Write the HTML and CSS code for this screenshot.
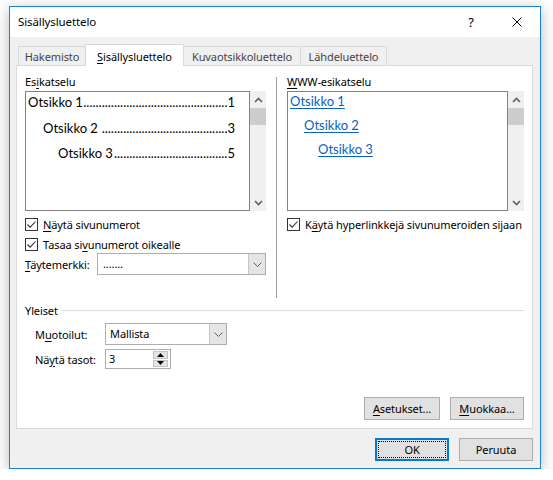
FILE: index.html
```html
<!DOCTYPE html>
<html lang="fi">
<head>
<meta charset="utf-8">
<title>Sisällysluettelo</title>
<link rel="stylesheet" href="styles.css">
</head>
<body>
<div class="window">
  <div class="titlebar">
    <span class="title">Sisällysluettelo</span>
    <div class="tb-btn help">?</div>
    <div class="tb-btn close">
      <svg width="10" height="10" viewBox="0 0 10 10"><path d="M0.5 0.5 L9.5 9.5 M9.5 0.5 L0.5 9.5" stroke="#000" stroke-width="1" fill="none"/></svg>
    </div>
  </div>
  <div class="body">
    <div class="tabs">
      <div class="tab t1">Hakemisto</div>
      <div class="tab t2 active"><u>S</u>isällysluettelo</div>
      <div class="tab t3">Kuvaotsikkoluettelo</div>
      <div class="tab t4">Lähdeluettelo</div>
    </div>
    <div class="panel">
      <div class="top">
        <div class="col left">
          <div class="label">Es<u>i</u>katselu</div>
          <div class="pv-wrap">
            <div class="preview pv-left">
              <div class="toc l1"><span class="tt">Otsikko 1</span><span class="dots">...............................................</span><span class="num">1</span></div>
              <div class="toc l2"><span class="tt">Otsikko 2</span><span class="dots">.........................................</span><span class="num">3</span></div>
              <div class="toc l3"><span class="tt">Otsikko 3</span><span class="dots">.....................................</span><span class="num">5</span></div>
            </div>
            <div class="scrollbar">
              <div class="sb-arrow"><svg width="9" height="6" viewBox="0 0 9 6"><path d="M1 5 L4.5 1.5 L8 5" stroke="#606060" stroke-width="1.6" fill="none"/></svg></div>
              <div class="sb-thumb"></div>
              <div class="sb-space"></div>
              <div class="sb-arrow"><svg width="9" height="6" viewBox="0 0 9 6"><path d="M1 1 L4.5 4.5 L8 1" stroke="#606060" stroke-width="1.6" fill="none"/></svg></div>
            </div>
          </div>
          <div class="check c1">
            <span class="box"><svg width="11" height="11" viewBox="0 0 11 11"><path d="M1.5 5.5 L4.2 8.2 L9.5 2.5" stroke="#333" stroke-width="1.1" fill="none"/></svg></span>
            <span><u>N</u>äytä sivunumerot</span>
          </div>
          <div class="check c2">
            <span class="box"><svg width="11" height="11" viewBox="0 0 11 11"><path d="M1.5 5.5 L4.2 8.2 L9.5 2.5" stroke="#333" stroke-width="1.1" fill="none"/></svg></span>
            <span>Tasaa si<u>v</u>unumerot oikealle</span>
          </div>
          <div class="fillrow">
            <span class="flabel"><u>T</u>äytemerkki:</span>
            <div class="combo combo-fill">
              <span class="cval">.......</span>
              <span class="cbtn"><svg width="9" height="5" viewBox="0 0 9 5"><path d="M0.5 0.5 L4.5 4.5 L8.5 0.5" stroke="#606060" stroke-width="1" fill="none"/></svg></span>
            </div>
          </div>
        </div>
        <div class="sep"></div>
        <div class="col right">
          <div class="label"><u>W</u>WW-esikatselu</div>
          <div class="pv-wrap">
            <div class="preview pv-right">
              <div class="link lk1">Otsikko 1</div>
              <div class="link lk2">Otsikko 2</div>
              <div class="link lk3">Otsikko 3</div>
            </div>
            <div class="scrollbar">
              <div class="sb-arrow"><svg width="9" height="6" viewBox="0 0 9 6"><path d="M1 5 L4.5 1.5 L8 5" stroke="#606060" stroke-width="1.6" fill="none"/></svg></div>
              <div class="sb-thumb"></div>
              <div class="sb-space"></div>
              <div class="sb-arrow"><svg width="9" height="6" viewBox="0 0 9 6"><path d="M1 1 L4.5 4.5 L8 1" stroke="#606060" stroke-width="1.6" fill="none"/></svg></div>
            </div>
          </div>
          <div class="check c1">
            <span class="box"><svg width="11" height="11" viewBox="0 0 11 11"><path d="M1.5 5.5 L4.2 8.2 L9.5 2.5" stroke="#333" stroke-width="1.1" fill="none"/></svg></span>
            <span>K<u>ä</u>ytä hyperlinkkejä sivunumeroiden sijaan</span>
          </div>
        </div>
      </div>
      <div class="group-head"><span>Yleiset</span><div class="gline"></div></div>
      <div class="frow r1">
        <span class="glabel">M<u>u</u>otoilut:</span>
        <div class="combo combo-fmt">
          <span class="cval">Mallista</span>
          <span class="cbtn"><svg width="9" height="5" viewBox="0 0 9 5"><path d="M0.5 0.5 L4.5 4.5 L8.5 0.5" stroke="#606060" stroke-width="1" fill="none"/></svg></span>
        </div>
      </div>
      <div class="frow r2">
        <span class="glabel">Nä<u>y</u>tä tasot:</span>
        <div class="spin">
          <span class="cval">3</span>
          <span class="spbtns">
            <span class="spbtn"><svg width="7" height="4" viewBox="0 0 7 4"><path d="M0 4 L3.5 0 L7 4 Z" fill="#000"/></svg></span>
            <span class="spbtn"><svg width="7" height="4" viewBox="0 0 7 4"><path d="M0 0 L3.5 4 L7 0 Z" fill="#000"/></svg></span>
          </span>
        </div>
      </div>
      <div class="panel-btns">
        <button class="btn b-aset"><u>A</u>setukset...</button>
        <button class="btn b-muok"><u>M</u>uokkaa...</button>
      </div>
    </div>
    <div class="footer">
      <button class="btn b-ok">OK</button>
      <button class="btn b-cancel">Peruuta</button>
    </div>
  </div>
</div>
</body>
</html>
```
FILE: styles.css
```css
html, body {
  margin: 0;
  padding: 0;
  background: #ffffff;
}
body {
  font-family: "Noto Sans", "Open Sans", "DejaVu Sans", sans-serif;
  font-size: 11px;
  letter-spacing: -0.1px;
  color: #000;
  padding: 6px 0 0 9px;
}
u { text-decoration: underline; text-underline-offset: 2px; }

.window {
  width: 532px;
  height: 463px;
  box-sizing: border-box;
  border: 1px solid #1883d7;
  background: #f0f0f0;
  box-shadow: 0 3px 14px rgba(0, 0, 0, 0.28);
  display: flex;
  flex-direction: column;
}

.titlebar {
  height: 30px;
  flex: none;
  background: #fff;
  display: flex;
  align-items: center;
}
.title { flex: 1; padding-left: 8px; line-height: 16px; font-size: 11.5px; }
.tb-btn {
  width: 46px;
  height: 30px;
  display: flex;
  align-items: center;
  justify-content: center;
}
.help { font-size: 13px; }

.body {
  flex: 1;
  display: flex;
  flex-direction: column;
  padding: 7px 7px 0 6px;
}

.tabs {
  display: flex;
  align-items: flex-end;
  height: 21px;
  padding-left: 2px;
  position: relative;
  z-index: 1;
}
.tab {
  box-sizing: border-box;
  height: 19px;
  border: 1px solid #d9d9d9;
  border-bottom: none;
  background: #f0f0f0;
  color: #444;
  text-align: center;
  line-height: 16px;
  padding-top: 2px;
  white-space: nowrap;
}
.t1 { width: 68px; }
.t2 { width: 99px; margin-left: -1px; }
.t3 { width: 118px; margin-left: -1px; }
.t4 { width: 87px; margin-left: -1px; }
.tab.active {
  height: 22px;
  margin-bottom: -1px;
  background: #fff;
  color: #000;
  padding-top: 4px;
  position: relative;
}

.panel {
  height: 364px;
  box-sizing: border-box;
  border: 1px solid #d9d9d9;
  background: #fff;
  padding: 8px 8px 8px 8px;
  display: flex;
  flex-direction: column;
}

.top { display: flex; height: 224px; flex: none; }
.col.left { width: 241px; }
.col.right { width: 237px; }
.sep {
  width: 1px;
  background: #a0a0a0;
  margin: 3px 10px 0 10px;
}

.label { height: 17px; line-height: 16px; }

.pv-wrap { display: flex; height: 120px; }
.preview {
  box-sizing: border-box;
  border: 1px solid #828282;
  background: #fff;
  overflow: hidden;
}
.pv-left { width: 225px; padding: 0 14px 0 0; }
.pv-right { width: 221px; }

.toc {
  display: flex;
  font-family: "Lato", "Noto Sans", sans-serif;
  font-size: 13px;
  letter-spacing: 0;
  line-height: 20px;
  white-space: nowrap;
}
.toc + .toc { margin-top: 5.6px; }
.l1 { padding-left: 2px; }
.l2 { padding-left: 17px; }
.l3 { padding-left: 32px; }
.toc .tt { flex: none; }
.toc .dots {
  flex: 1;
  overflow: hidden;
  direction: rtl;
  text-align: right;
  min-width: 0;
}
.toc .num { flex: none; }

.link {
  font-family: "Lato", "Noto Sans", sans-serif;
  font-size: 13px;
  letter-spacing: 0;
  line-height: 18px;
  color: #0563c1;
  text-decoration: underline;
  text-underline-offset: 2px;
}
.link + .link { margin-top: 6px; }
.lk1 { padding-left: 2px; }
.lk2 { padding-left: 16px; }
.lk3 { padding-left: 30px; }

.scrollbar {
  width: 16px;
  background: #f0f0f0;
  display: flex;
  flex-direction: column;
}
.sb-arrow {
  height: 17px;
  display: flex;
  align-items: center;
  justify-content: center;
}
.sb-thumb { height: 17px; background: #cdcdcd; }
.sb-space { flex: 1; }

.check {
  display: flex;
  align-items: center;
  height: 15px;
  white-space: nowrap;
}
.check.c1 { margin-top: 6px; }
.check.c2 { margin-top: 5px; }
.box {
  width: 13px;
  height: 13px;
  box-sizing: border-box;
  border: 1px solid #333;
  background: #fff;
  margin-right: 5px;
  flex: none;
  display: flex;
}

.fillrow {
  display: flex;
  align-items: center;
  margin-top: 1px;
  height: 22px;
}
.flabel { width: 72px; }

.combo, .spin {
  display: flex;
  box-sizing: border-box;
  border: 1px solid #adadad;
  background: #fff;
}
.combo-fill { width: 169px; height: 22px; }
.combo-fmt { width: 122px; height: 22px; }
.cval { flex: 1; padding-left: 4px; line-height: 20px; }
.combo-fill .cval { padding-left: 5px; }
.cbtn {
  width: 16px;
  background: #e5e5e5;
  border-left: 1px solid #c4c4c4;
  display: flex;
  align-items: center;
  justify-content: center;
}

.group-head {
  display: flex;
  align-items: center;
  height: 16px;
  margin-top: 4px;
}
.gline { flex: 1; height: 1px; background: #dcdcdc; margin-left: 4px; }

.frow { display: flex; align-items: center; padding-left: 10px; }
.frow.r1 { margin-top: 5px; height: 22px; }
.frow.r2 { margin-top: 4px; height: 20px; }
.glabel { width: 70px; }
.spin { width: 66px; height: 20px; }
.spin .cval { padding-left: 3px; line-height: 18px; }
.spbtns {
  display: flex;
  flex-direction: column;
  width: 15px;
  padding: 1px 2px 1px 0;
  gap: 1px;
}
.spbtn {
  flex: 1;
  background: #e5e5e5;
  border: 1px solid #c4c4c4;
  display: flex;
  align-items: center;
  justify-content: center;
}

.panel-btns {
  margin-top: auto;
  display: flex;
  justify-content: flex-end;
  gap: 10px;
}
.btn {
  font-family: inherit;
  font-size: 11px;
  letter-spacing: -0.1px;
  color: #000;
  height: 23px;
  box-sizing: border-box;
  background: #e1e1e1;
  border: 1px solid #adadad;
  padding: 0;
  margin: 0;
}
.b-aset { width: 76px; }
.b-muok { width: 74px; }

.footer {
  display: flex;
  justify-content: flex-end;
  gap: 10px;
  padding-top: 9px;
}
.b-ok {
  width: 74px;
  border: 2px solid #0078d7;
  outline: 1px dotted #000;
  outline-offset: -4px;
}
.b-cancel { width: 74px; }
```
